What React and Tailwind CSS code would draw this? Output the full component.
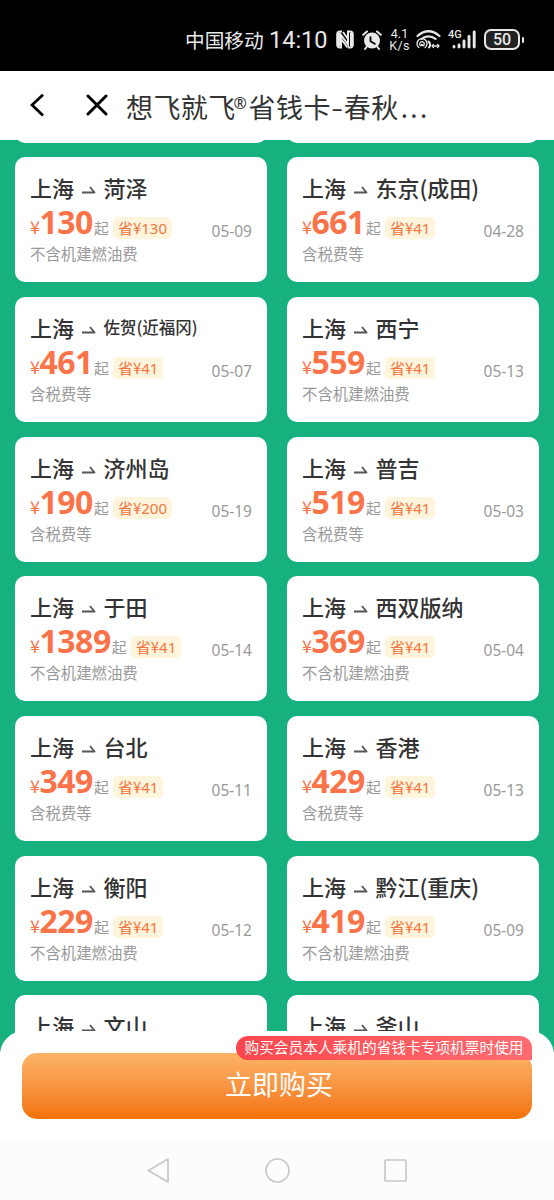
import { clsx } from 'clsx';

const flights = [
  { to: '菏泽', price: 130, save: 130, date: '05-09', note: '不含机建燃油费' },
  { to: '东京(成田)', price: 661, save: 41, date: '04-28', note: '含税费等' },
  { to: '佐贺(近福冈)', price: 461, save: 41, date: '05-07', note: '含税费等', small: true },
  { to: '西宁', price: 559, save: 41, date: '05-13', note: '不含机建燃油费' },
  { to: '济州岛', price: 190, save: 200, date: '05-19', note: '含税费等' },
  { to: '普吉', price: 519, save: 41, date: '05-03', note: '含税费等' },
  { to: '于田', price: 1389, save: 41, date: '05-14', note: '不含机建燃油费' },
  { to: '西双版纳', price: 369, save: 41, date: '05-04', note: '不含机建燃油费' },
  { to: '台北', price: 349, save: 41, date: '05-11', note: '含税费等' },
  { to: '香港', price: 429, save: 41, date: '05-13', note: '含税费等' },
  { to: '衡阳', price: 229, save: 41, date: '05-12', note: '不含机建燃油费' },
  { to: '黔江(重庆)', price: 419, save: 41, date: '05-09', note: '不含机建燃油费' },
  { to: '文山' },
  { to: '釜山' },
];

const StatusBar = () => (
  <div className="flex h-[70.5px] items-center bg-black pt-[9px] pl-[185px] text-[#e8e8e8]">
    <span className="w-[84px] whitespace-nowrap text-[19.7px] leading-6">中国移动</span>
    <span className="w-[67px] whitespace-nowrap font-[Roboto] text-[23.5px] leading-6">14:10</span>
    {/* NFC */}
    <svg className="h-[19px] w-[18px]" viewBox="0 0 18 19" fill="none" stroke="currentColor">
      <path d="M6 1.5H4Q1.2 1.5 1.2 4.5v10q0 3 2.8 3h1V5l7 9.5V1.5h2q2.800 0 2.800 3v10q0 3-2.800 3h-2" strokeWidth="2" />
      <path d="M3 3v13M15 3v13M7 2l5 7M5.500 9.500l6 8" strokeWidth="2" />
    </svg>
    {/* Alarm */}
    <svg className="ml-2 h-[20px] w-[20px]" viewBox="0 0 20 20">
      <circle cx="10" cy="10.500" r="8" fill="currentColor" />
      <path d="M1.200 4.800 5 1.500M18.800 4.800 15 1.500M4.500 17l-1.500 2M15.500 17l1.500 2" stroke="currentColor" strokeWidth="2" strokeLinecap="round" />
      <path d="M8.500 6.500v4.700l5 3" stroke="black" strokeWidth="1.800" fill="none" />
    </svg>
    <div className="ml-[7px] flex w-[21px] flex-col items-center font-[Roboto] text-[12.500px] leading-[12px]">
      <span>4.1</span>
      <span className="tracking-[0.3px]">K/s</span>
    </div>
    {/* Wi-Fi with hotspot */}
    <svg className="ml-1.5 h-[19px] w-[25px]" viewBox="0 0 25 19" fill="none" stroke="currentColor" strokeLinecap="round">
      <path d="M1.500 6Q12.500-3.500 23.500 6M5.500 8.800q7-5 14 0" strokeWidth="2.200" />
      <path d="M2.800 17.500a5 5 0 1 1 6.400 0" strokeWidth="1.400" />
      <path d="M4.600 15.800a2.300 2.300 0 1 1 2.800 0" strokeWidth="1.300" />
      <circle cx="6" cy="15" r="0.900" fill="currentColor" />
      <path d="M12.500 11.500q3 3 .5 6" strokeWidth="2" />
      <path d="m17.500 14.500-1.500 1.500 1.500 1.500M21.500 14.500l1.500 1.500-1.500 1.500M18 16h3" strokeWidth="1.300" />
    </svg>
    {/* Signal */}
    <div className="relative ml-[7px] h-[19px] w-[28px]">
      <span className="absolute -top-px left-0 font-[Roboto] text-[11px] leading-[11px] font-medium">4G</span>
      <svg className="h-full w-full" viewBox="0 0 28 19" stroke="currentColor" strokeWidth="2.900" strokeLinecap="round">
        <path d="M6 16.500v.5M11 15v2M16 11v6M21 6.500V17M26.200 2v15" />
      </svg>
    </div>
    <div className="ml-2 flex h-[21px] w-[36px] items-center justify-center rounded-[7px] border-2 border-[#e8e8e8] bg-[#222] font-[Roboto] text-[16px] font-medium">
      50
    </div>
    <span className="ml-0.5 h-1.5 w-0.5 rounded-full bg-[#e8e8e8]"></span>
  </div>
);

const Header = () => (
  <div className="flex h-[69.5px] items-center bg-white pl-[30px]">
    <svg className="h-6 w-[14px]" viewBox="0 0 14 24" fill="none" stroke="black" strokeWidth="2.800">
      <path d="M13 1.700 2 12l11 10.500" />
    </svg>
    <svg className="ml-[42px] h-[22px] w-[22px]" viewBox="0 0 22 22" fill="none" stroke="black" strokeWidth="3" strokeLinecap="round">
      <path d="m2 2 18 18M20 2 2 20" />
    </svg>
    <h1 className="mt-1 ml-[18px] flex items-baseline whitespace-nowrap text-[27px] leading-10 tracking-[0.4px] text-[#333]">
      <span>想飞就飞</span>
      <span className="relative -top-[9px] -left-0.5 w-[13px] font-['Noto_Sans'] text-[16px] leading-none tracking-normal">®</span>
      <span>省钱卡</span>
      <span className="w-[13px] origin-left scale-x-130">-</span>
      <span>春秋</span>
      <span className="ml-0.5 font-['Noto_Sans'] tracking-[2.5px]">...</span>
    </h1>
  </div>
);

const FlightCard = ({ flight }) => (
  <div className="h-[125px] rounded-[10px] bg-white px-[15px] pt-4">
    <div className="flex h-[29px] items-start whitespace-nowrap text-[22px] leading-[29px] font-medium text-[#333]">
      <span className="w-[52px]">上海</span>
      <svg className="mt-[13px] mr-[7.500px] h-2 w-[14px]" viewBox="0 0 14 8" fill="none" stroke="#555" strokeWidth="1.900">
        <path d="M0 6.500h12.500L8 1" strokeLinejoin="round" />
      </svg>
      <span className={clsx(flight.small && 'text-[16.500px]')}>{flight.to}</span>
    </div>
    {flight.price && (
      <>
        <div className="flex h-[39px] items-baseline whitespace-nowrap text-[15px] leading-[39px] text-[#999]">
          <span className="w-[9.500px] text-[18px] text-[#fb7349]">¥</span>
          <span className="font-['Noto_Sans'] text-[32px] font-bold tracking-[-0.5px] text-[#fb7349]">{flight.price}</span>
          <span className="ml-px">起</span>
          <span className="ml-1 h-[22px] rounded-[5px] bg-[#fff5dc] px-[5px] leading-[22px] text-[#f5743f]">
            省¥<span className="font-['Noto_Sans']">{flight.save}</span>
          </span>
          <span className="relative top-[3px] ml-auto font-['Noto_Sans'] text-[15.500px] text-[#999]">{flight.date}</span>
        </div>
        <p className="text-[15.400px] leading-6 text-[#999]">{flight.note}</p>
      </>
    )}
  </div>
);

const BuyBar = () => (
  <div className="relative -mt-[21px] h-[110px] rounded-t-[24px] bg-white px-[22px] pt-[22px]">
    <button className="block h-[66px] w-full rounded-[15px] bg-linear-to-b from-[#fcb466] to-[#f27200] pb-1 pl-1 text-[27px] text-white">
      立即购买
    </button>
    <span className="absolute top-[5px] right-[22px] flex h-6 w-[296px] items-center justify-center rounded-l-[12px] rounded-tr-[12px] bg-linear-to-r from-[#ff454d] to-[#ff6b70] pb-0.5 text-[14.700px] whitespace-nowrap text-white">
      购买会员本人乘机的省钱卡专项机票时使用
    </span>
  </div>
);

const NavBar = () => (
  <div className="flex h-[59px] items-center justify-between bg-[#fcfcfc] px-[147px]">
    <svg className="h-[25px] w-[23px]" viewBox="0 0 23 25" fill="none" stroke="#c8c8c8" strokeWidth="1.700" strokeLinejoin="round">
      <path d="M1.500 12.500 21 1v23z" />
    </svg>
    <svg className="h-[25px] w-[25px]" viewBox="0 0 25 25" fill="none" stroke="#c8c8c8" strokeWidth="1.700">
      <circle cx="12.500" cy="12.500" r="11.500" />
    </svg>
    <svg className="h-[23px] w-[23px]" viewBox="0 0 23 23" fill="none" stroke="#c8c8c8" strokeWidth="1.700">
      <rect x="1" y="1" width="21" height="21" rx="1" />
    </svg>
  </div>
);

const App = () => (
  <div className="h-[1200px] w-[554px] overflow-hidden bg-white font-['Noto_Sans_CJK_SC',sans-serif]">
    <StatusBar />
    <Header />
    <div className="h-[912px] overflow-hidden bg-[#16b17f] px-[15px]">
      {/* Tail of the row scrolled under the header */}
      <div className="mb-[14.700px] grid grid-cols-2 gap-x-5">
        <div className="flex h-[2.500px] items-end overflow-hidden">
          <div className="h-5 w-full shrink-0 rounded-[10px] bg-white"></div>
        </div>
        <div className="flex h-[2.500px] items-end overflow-hidden">
          <div className="h-5 w-full shrink-0 rounded-[10px] bg-white"></div>
        </div>
      </div>
      <div className="grid grid-cols-2 gap-x-5 gap-y-[14.700px]">
        {flights.map((flight) => (
          <FlightCard key={flight.to} flight={flight} />
        ))}
      </div>
    </div>
    <BuyBar />
    <NavBar />
  </div>
);

export default App;
